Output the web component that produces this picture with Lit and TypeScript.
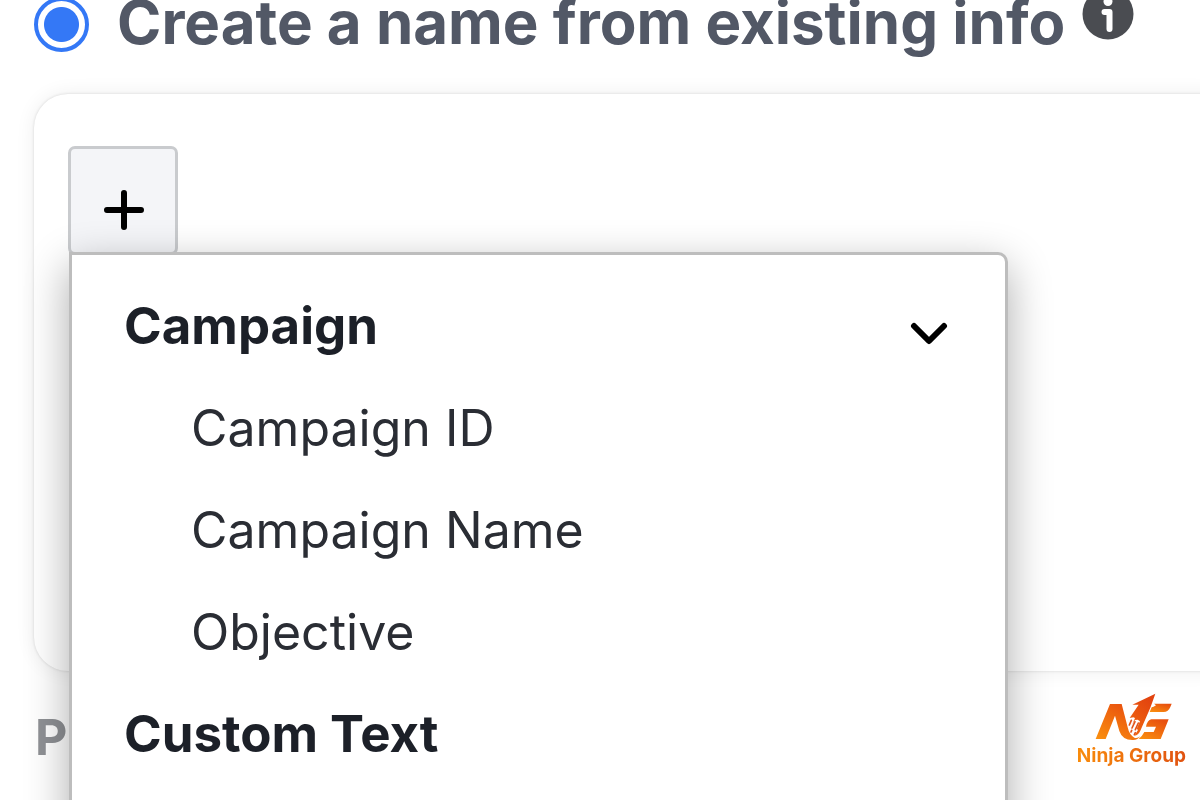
import { LitElement, html, css } from "lit";
import { customElement, state } from "lit/decorators.js";

@customElement("brand-mark")
class BrandMark extends LitElement {
  static styles = css`
    :host {
      display: flex;
      flex-direction: column;
      align-items: center;
      gap: 3px;
    }
    .mark {
      display: block;
      width: 78px;
      height: 48px;
      margin-left: 6px;
    }
    .name {
      font: 700 19px/24px Inter, sans-serif;
      white-space: nowrap;
      color: transparent;
      background: linear-gradient(90deg, #f98c0c, #e05210);
      background-clip: text;
      -webkit-background-clip: text;
    }
  `;
  render() {
    return html`
      <svg class="mark" viewBox="110 38 234 144" aria-hidden="true">
        <defs>
          <linearGradient id="n" x1="0" y1="1" x2="0.7" y2="0">
            <stop offset="0" stop-color="#fb920f" />
            <stop offset="1" stop-color="#e8500f" />
          </linearGradient>
          <linearGradient id="a" x1="0" y1="1" x2="0.6" y2="0">
            <stop offset="0" stop-color="#f26a10" />
            <stop offset="1" stop-color="#e2430f" />
          </linearGradient>
        </defs>
        <path fill="url(#n)" d="M112 176 L155 71 H190 L208 141 Q213 164 228 172 Q236 176 246 168 Q238 180 222 179 Q192 179 183 152 L170 106 L142 176 Z" />
        <path fill="url(#a)" d="M291 40 L222 73 H241 L214 113 L225 111 L230 113 L222 132 L230 119 L238 118 L245 123 L235 145 L239 149 L228 166 Q240 164 246 151 L276 82 Z" />
        <g stroke="#e2541b" stroke-width="5" stroke-linecap="round">
          <path d="M219 120 L213 134" />
          <path d="M230 124 L221 143" />
          <path d="M240 128 L231 148" />
          <path d="M220 150 L218 155" />
          <path d="M231 157 L228 163" />
        </g>
        <path fill="url(#n)" d="M287 70 H340 L336 80 Q330 95 316 95 H274 L280 81 Q285 81 293 75 Z" />
        <path fill="url(#n)" d="M279 117 H331 L307 176 H241 Q250 170 258 155 H286 L293 139 H263 Q267 119 279 117 Z" />
      </svg>
      <span class="name">Ninja Group</span>
    `;
  }
}

@customElement("app-root")
class AppRoot extends LitElement {
  @state() private open = true;

  static styles = css`
    :host {
      display: block;
      position: relative;
      height: 100vh;
      overflow: hidden;
      background: #fff;
      font-family: Inter, sans-serif;
      color: #1c2028;
    }
    * {
      box-sizing: border-box;
    }
    .choice {
      display: flex;
      align-items: center;
      height: 56px;
      margin: -4px 0 42px;
      padding-left: 34px;
    }
    .radio {
      appearance: none;
      flex: none;
      width: 55px;
      height: 55px;
      margin: 0 28px 0 0;
      border: 4px solid #3478f6;
      border-radius: 50%;
      background: radial-gradient(circle, #3478f6 17px, #fff 18px);
    }
    .title {
      padding-bottom: 4px;
      font: 700 60px/60px Inter, sans-serif;
      color: #525866;
      white-space: nowrap;
    }
    .info {
      flex: none;
      align-self: flex-start;
      width: 52px;
      height: 52px;
      margin: -8px 0 0 17px;
      padding: 0;
      border: 0;
      background: none;
    }
    .info svg,
    .add svg {
      display: block;
    }
    .card {
      height: 577px;
      margin: 0 -48px 0 34px;
      padding: 52px 34px;
      border-radius: 34px;
      background: #fff;
      box-shadow: 0 0 3px rgba(0, 0, 0, 0.14), 0 0 20px rgba(0, 0, 0, 0.07);
    }
    .picker {
      position: relative;
      width: 940px;
    }
    .add {
      display: grid;
      place-items: center;
      width: 110px;
      height: 109px;
      padding: 18px 0 0 2px;
      border: 3px solid #c9cbce;
      border-radius: 7px;
      background: #f4f5f8;
    }
    .menu {
      position: absolute;
      top: 106px;
      left: 1px;
      right: 0;
      margin: 0;
      padding: 20px 52px 60px;
      list-style: none;
      border: 3px solid #bdbdbd;
      border-radius: 0 10px 10px 10px;
      background: #fff;
      background-clip: padding-box;
      box-shadow: 0 14px 44px rgba(0, 0, 0, 0.33);
    }
    .row {
      display: flex;
      align-items: center;
      justify-content: space-between;
      width: 100%;
      height: 102px;
      padding: 0;
      border: 0;
      background: none;
      font: 400 50px/60px Inter, sans-serif;
      color: #2a2d34;
      text-align: left;
    }
    .group {
      font-size: 51px;
      font-weight: 700;
      color: #1c2028;
    }
    .child {
      padding-left: 67px;
    }
    .chevron {
      margin: 16px 5px 0 0;
    }
    .preview {
      margin: 36px 0 0 35px;
      font: 700 50px/60px Inter, sans-serif;
      color: #8f9195;
    }
    .brand {
      position: absolute;
      right: 14px;
      bottom: 32px;
    }
  `;

  render() {
    return html`
      <div class="choice">
        <input class="radio" type="radio" id="existing" name="naming" checked />
        <label class="title" for="existing">Create a name from existing info</label>
        <button class="info" aria-label="More information">
          <svg width="52" height="52" viewBox="0 0 52 52">
            <circle cx="26" cy="26" r="25.5" fill="#4a4c51" />
            <circle cx="26" cy="13.500" r="4.5" fill="#fff" />
            <path d="M22.500 24 H27.500 V41" fill="none" stroke="#fff" stroke-width="6" stroke-linecap="round" stroke-linejoin="round" />
          </svg>
        </button>
      </div>
      <section class="card">
        <div class="picker">
          <button class="add" aria-label="Add field" @click=${() => (this.open = !this.open)}>
            <svg width="42" height="42" viewBox="0 0 42 42">
              <path d="M21 4 V38 M4 21 H38" stroke="#000" stroke-width="6" stroke-linecap="round" />
            </svg>
          </button>
          ${this.open
            ? html`<ul class="menu">
                <li>
                  <button class="row group">
                    Campaign
                    <svg class="chevron" width="38" height="26" viewBox="0 0 38 26" aria-hidden="true">
                      <path d="M4 5 L19 20 L34 5" fill="none" stroke="#000" stroke-width="6" stroke-linecap="round" stroke-linejoin="round" />
                    </svg>
                  </button>
                </li>
                ${["Campaign ID", "Campaign Name", "Objective"].map(
                  (name) => html`<li><button class="row child">${name}</button></li>`
                )}
                <li><button class="row group">Custom Text</button></li>
              </ul>`
            : null}
        </div>
      </section>
      <div class="preview">P</div>
      <brand-mark class="brand"></brand-mark>
    `;
  }
}
